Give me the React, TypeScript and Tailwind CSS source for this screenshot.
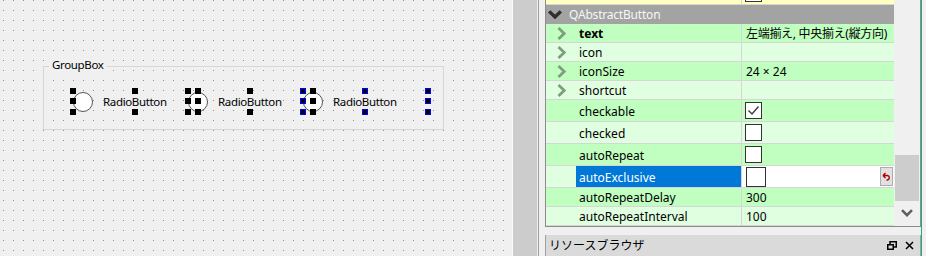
import React from "react";

const A = "bg-[#c0ffc0]";
const B = "bg-[#e0ffe0]";

function ChevronRight() {
  return (
    <svg width="9" height="13" viewBox="0 0 9 13" className="shrink-0">
      <path d="M1.5 1 L7.2 6.5 L1.5 12" fill="none" stroke="#7e9f7e" strokeWidth="2.8" />
    </svg>
  );
}

function ChevronDown({ color, w = 12, h = 8, sw = 2.6 }: { color: string; w?: number; h?: number; sw?: number }) {
  return (
    <svg width={w} height={h} viewBox="0 0 12 8" className="shrink-0" preserveAspectRatio="none">
      <path d="M1 1.2 L6 6.2 L11 1.2" fill="none" stroke={color} strokeWidth={sw} />
    </svg>
  );
}

function CheckBox({ checked = false, big = false }: { checked?: boolean; big?: boolean }) {
  return (
    <div
      className={
        big
          ? "w-[20px] h-[20px] border border-[#333333] bg-white"
          : "w-[17px] h-[17px] border border-[#333333] bg-white flex items-center justify-center"
      }
    >
      {checked && (
        <svg width="15" height="15" viewBox="0 0 15 15">
          <path d="M2.5 7.5 L6 11 L12.5 3.5" fill="none" stroke="#3a3a3a" strokeWidth="1.4" />
        </svg>
      )}
    </div>
  );
}

type RowProps = {
  bg: string;
  name: string;
  bold?: boolean;
  expandable?: boolean;
  tall?: boolean;
  value?: React.ReactNode;
};

function Row({ bg, name, bold, expandable, tall, value }: RowProps) {
  const shift = tall ? "pt-[3px]" : "pt-[1px]";
  return (
    <div className={`flex ${tall ? "h-[22px]" : "h-[19px]"} border-b border-[#d6d6d6] ${bg}`}>
      <div className="w-[196px] border-r border-[#d6d6d6] flex items-center">
        {expandable ? (
          <div className="flex items-center pl-[11px]">
            <ChevronRight />
            <span className={`ml-[13px] ${shift} ${bold ? "font-bold" : ""}`}>{name}</span>
          </div>
        ) : (
          <span className={`pl-[33px] ${shift}`}>{name}</span>
        )}
      </div>
      <div className={`flex-1 flex items-center pl-[4px] ${tall ? "" : "pt-[1px]"}`}>{value}</div>
    </div>
  );
}

function Handle({ x, y, blue }: { x: number; y: number; blue?: boolean }) {
  return (
    <div
      className={
        blue
          ? "absolute w-[6px] h-[6px] bg-black border border-[#0000ff]"
          : "absolute w-[6px] h-[6px] bg-black"
      }
      style={{ left: x, top: y }}
    />
  );
}

function Radio({ left }: { left: number }) {
  return (
    <div className="absolute top-[24px] w-[125px] h-[21px] flex items-center" style={{ left }}>
      <div className="w-[20px] h-[20px] rounded-full border border-[#555555] bg-white shrink-0" />
      <span className="ml-[10px] text-black text-[11.5px] tracking-[-0.35px]">RadioButton</span>
    </div>
  );
}

function Handles({ left, blue }: { left: number; blue?: boolean }) {
  const xs = [left - 3, left + 59, left + 122];
  const ys = [21, 31, 42];
  return (
    <>
      <Handle x={xs[0]} y={ys[0]} blue={blue} />
      <Handle x={xs[0]} y={ys[1]} blue={blue} />
      <Handle x={xs[0]} y={ys[2]} blue={blue} />
      <Handle x={xs[1]} y={ys[0]} blue={blue} />
      <Handle x={xs[1]} y={ys[2]} blue={blue} />
      <Handle x={xs[2]} y={ys[0]} blue={blue} />
      <Handle x={xs[2]} y={ys[1]} blue={blue} />
      <Handle x={xs[2]} y={ys[2]} blue={blue} />
    </>
  );
}

export default function App() {
  return (
    <div className="w-[926px] h-[256px] flex bg-[#f0f0f0] text-[12px] text-black overflow-hidden [font-family:'Noto_Sans','Noto_Sans_CJK_JP',sans-serif]">
      {/* Form canvas */}
      <div className="relative w-[512px] h-full bg-[#f0f0f0] pt-[66px] pl-[43px]">
        <svg className="absolute inset-0" width="512" height="256">
          <defs>
            <pattern id="dots" x="3" y="0" width="10" height="10" patternUnits="userSpaceOnUse">
              <rect width="1" height="1" fill="#8f8f8f" />
            </pattern>
          </defs>
          <rect width="512" height="256" fill="url(#dots)" />
        </svg>
        <div className="relative w-[401px] h-[64px] border border-[#d6d6d6]">
          <span className="absolute -top-[10px] left-[5px] px-[3px] bg-[#f0f0f0] leading-[16px] text-[11.5px] tracking-[-0.35px]">GroupBox</span>
          <Radio left={29} />
          <Radio left={144} />
          <Radio left={259} />
          <Handles left={29} />
          <Handles left={144} />
          <Handles left={259} blue />
        </div>
      </div>

      {/* splitter */}
      <div className="w-px h-full bg-[#fbfbfb]" />
      <div className="w-[24px] h-full bg-[#cccccc]" />
      <div className="w-px h-full bg-[#f0f0f0]" />

      {/* Right panel */}
      <div className="flex h-full border-l border-[#a0a0a0] pl-[6px] flex-1">
        <div className="w-[376px] flex flex-col">
          {/* property tree */}
          <div className="h-[227px] flex border-x border-b border-[#8c8c8c]">
            <div className="w-[348px] h-[226px] overflow-hidden flex flex-col">
              <div className="flex h-[22px] -mt-[17px] shrink-0 border-b border-[#d6d6d6] bg-[#ffffc0]">
                <div className="w-[196px] border-r border-[#d6d6d6]" />
                <div className="flex-1 flex items-center pl-[3px]">
                  <CheckBox />
                </div>
              </div>
              <div className="flex items-center h-[19px] shrink-0 bg-[#a3a3a3] pl-[2px]">
                <ChevronDown color="#2e2e2e" w={14} h={9} sw={3} />
                <span className="ml-[7px] pt-[1px] text-[#f7f7f7] tracking-[-0.2px]">QAbstractButton</span>
              </div>
              <Row bg={A} name="text" bold expandable value={<span className="tracking-[-0.3px]">左端揃え, 中央揃え(縦方向)</span>} />
              <Row bg={B} name="icon" expandable />
              <Row bg={A} name="iconSize" expandable value={<span>24 × 24</span>} />
              <Row bg={B} name="shortcut" expandable />
              <Row bg={A} name="checkable" tall value={<div className="-ml-[1px]"><CheckBox checked /></div>} />
              <Row bg={B} name="checked" tall value={<div className="-ml-[1px]"><CheckBox /></div>} />
              <Row bg={A} name="autoRepeat" tall value={<div className="-ml-[1px]"><CheckBox /></div>} />
              <div className={`flex h-[22px] border-b border-[#d6d6d6] ${B}`}>
                <div className="w-[196px] border-r border-[#d6d6d6] pl-[30px] flex">
                  <div className="flex-1 bg-[#0078d7] text-white flex items-center pl-[3px] pt-[3px]">autoExclusive</div>
                </div>
                <div className="flex-1 bg-white flex items-center justify-between pl-[4px] pr-[1px]">
                  <CheckBox big />
                  <div className="w-[13px] h-[19px] bg-[#e1e1e1] border border-[#adadad] flex items-center justify-center">
                    <svg width="9" height="9" viewBox="0 0 9 9">
                      <path d="M1 3.5 L3.5 1 M1 3.5 L3.5 6 M1 3.5 H5.5 A2.3 2.3 0 0 1 5.5 8 H4.5" fill="none" stroke="#b00000" strokeWidth="1.4" />
                    </svg>
                  </div>
                </div>
              </div>
              <Row bg={A} name="autoRepeatDelay" value={<span>300</span>} />
              <Row bg={B} name="autoRepeatInterval" value={<span>100</span>} />
            </div>
            {/* scrollbar */}
            <div className="w-[26px] h-[226px] bg-[#f0f0f0] flex flex-col">
              <div className="mt-[155px] h-[46px] mx-[1px] bg-[#cdcdcd]" />
              <div className="h-[24px] flex items-center justify-center">
                <ChevronDown color="#606060" w={12} h={8} />
              </div>
            </div>
          </div>
          {/* gap */}
          <div className="h-[8px]" />
          {/* dock title */}
          <div className="h-[21px] flex items-center bg-[#dadada] border-x border-[#a0a0a0] pl-[3px] pr-[5px]">
            <span className="flex-1">リソースブラウザ</span>
            <svg width="10" height="9" viewBox="0 0 10 9" className="mr-[8px]">
              <path d="M3 3 V0.75 H9.25 V6 H6.5" fill="none" stroke="#000" strokeWidth="1.5" />
              <rect x="0.75" y="3.75" width="5.5" height="4.5" fill="none" stroke="#000" strokeWidth="1.5" />
            </svg>
            <svg width="9" height="9" viewBox="0 0 9 9" className="mr-[1px]">
              <path d="M1 1 L8 8 M8 1 L1 8" stroke="#000" strokeWidth="1.5" />
            </svg>
          </div>
        </div>
        <div className="w-px h-full bg-[#2aa58a]" />
        <div className="flex-1 h-full bg-[#f0f0f0]" />
      </div>
    </div>
  );
}
